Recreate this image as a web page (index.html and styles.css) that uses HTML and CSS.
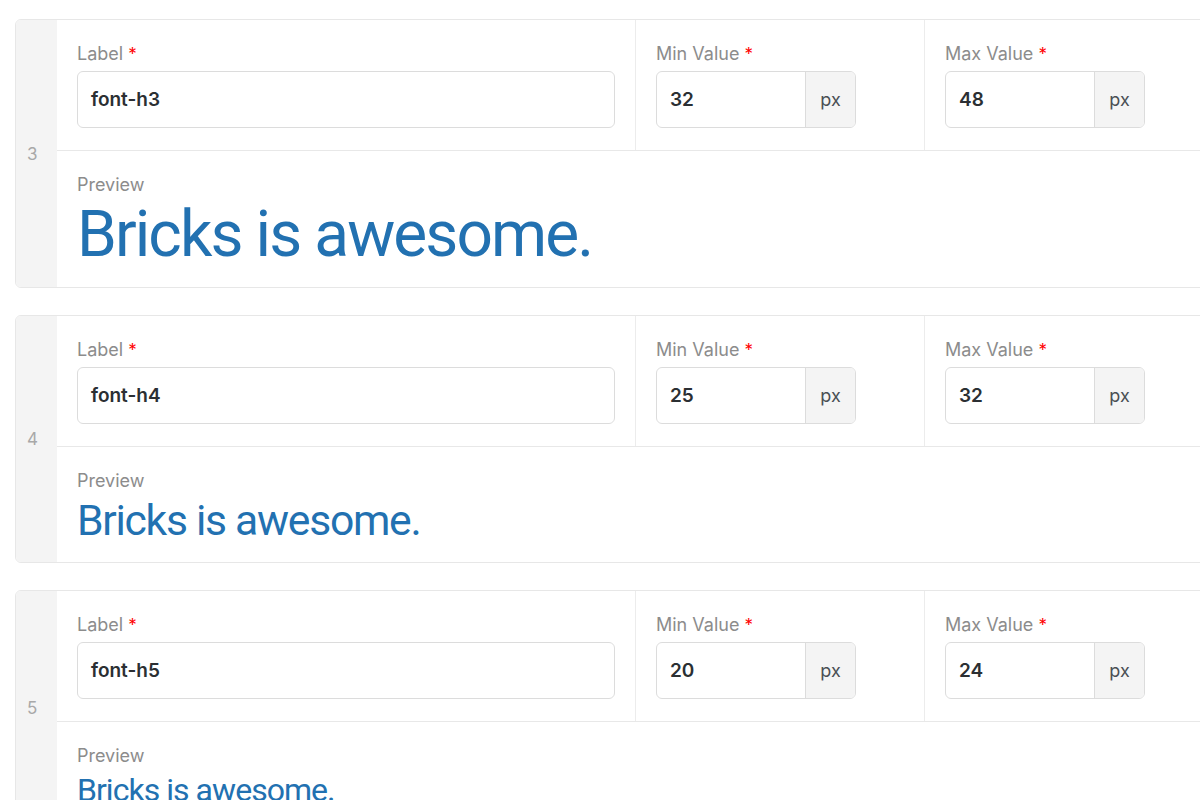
FILE: index.html
```html
<!DOCTYPE html>
<html>
<head>
<meta charset="utf-8">
<link rel="stylesheet" href="styles.css">
</head>
<body>
<div class="list">
  <div class="card">
    <div class="gutter"><span class="num">3</span></div>
    <div class="main">
      <div class="fields">
        <div class="col col-label">
          <div class="lbl">Label <span class="req">*</span></div>
          <div class="input"><span class="val">font-h3</span></div>
        </div>
        <div class="col">
          <div class="lbl">Min Value <span class="req">*</span></div>
          <div class="input unit"><span class="val">32</span><span class="addon">px</span></div>
        </div>
        <div class="col">
          <div class="lbl">Max Value <span class="req">*</span></div>
          <div class="input unit"><span class="val">48</span><span class="addon">px</span></div>
        </div>
      </div>
      <div class="preview">
        <div class="lbl">Preview</div>
        <div class="sample s-h3">Bricks is awesome.</div>
      </div>
    </div>
  </div>

  <div class="card">
    <div class="gutter"><span class="num">4</span></div>
    <div class="main">
      <div class="fields">
        <div class="col col-label">
          <div class="lbl">Label <span class="req">*</span></div>
          <div class="input"><span class="val">font-h4</span></div>
        </div>
        <div class="col">
          <div class="lbl">Min Value <span class="req">*</span></div>
          <div class="input unit"><span class="val">25</span><span class="addon">px</span></div>
        </div>
        <div class="col">
          <div class="lbl">Max Value <span class="req">*</span></div>
          <div class="input unit"><span class="val">32</span><span class="addon">px</span></div>
        </div>
      </div>
      <div class="preview">
        <div class="lbl">Preview</div>
        <div class="sample s-h4">Bricks is awesome.</div>
      </div>
    </div>
  </div>

  <div class="card">
    <div class="gutter"><span class="num">5</span></div>
    <div class="main">
      <div class="fields">
        <div class="col col-label">
          <div class="lbl">Label <span class="req">*</span></div>
          <div class="input"><span class="val">font-h5</span></div>
        </div>
        <div class="col">
          <div class="lbl">Min Value <span class="req">*</span></div>
          <div class="input unit"><span class="val">20</span><span class="addon">px</span></div>
        </div>
        <div class="col">
          <div class="lbl">Max Value <span class="req">*</span></div>
          <div class="input unit"><span class="val">24</span><span class="addon">px</span></div>
        </div>
      </div>
      <div class="preview">
        <div class="lbl">Preview</div>
        <div class="sample s-h5">Bricks is awesome.</div>
      </div>
    </div>
  </div>
</div>
</body>
</html>
```

FILE: styles.css
```css
html, body {
  margin: 0;
  padding: 0;
  background: #ffffff;
  overflow: hidden;
  width: 1200px;
  height: 800px;
}
body {
  font-family: Inter, "Noto Sans", "Liberation Sans", sans-serif;
  color: #2b2f33;
}
.list {
  padding: 19px 0 0 15px;
  display: flex;
  flex-direction: column;
  gap: 27px;
  width: 1400px;
}
.card {
  display: flex;
  border: 1px solid #e7e7e7;
  border-radius: 6px;
  overflow: hidden;
  background: #fff;
}
.gutter {
  width: 41px;
  flex: none;
  background: #f4f4f4;
  display: flex;
  align-items: center;
  padding-left: 11px;
  box-sizing: border-box;
}
.num {
  font-size: 17px;
  color: #a8a8a8;
}
.main {
  flex: 1;
  display: flex;
  flex-direction: column;
}
.fields {
  display: grid;
  grid-template-columns: 579px 289px 289px 1fr;
  border-bottom: 1px solid #e8e8e8;
}
.col {
  padding: 22px 20px 22px 20px;
  border-right: 1px solid #ececec;
}
.col:nth-child(3) {
  border-right: none;
}
.lbl {
  font-size: 18px;
  line-height: 24px;
  color: #8c8c8c;
  margin-bottom: 5px;
}
.preview .lbl {
  margin-bottom: 6px;
}
.req {
  color: #ff0000;
  font-size: 17px;
}
.input {
  height: 57px;
  box-sizing: border-box;
  border: 1px solid #dcdcdc;
  border-radius: 6px;
  display: flex;
  align-items: center;
  overflow: hidden;
  background: #fff;
}
.val {
  flex: 1;
  padding-left: 13px;
  font-size: 19px;
  font-weight: 600;
  color: #2b2f33;
}
.unit {
  width: 200px;
}
.addon {
  flex: none;
  width: 49px;
  align-self: stretch;
  display: flex;
  align-items: center;
  justify-content: center;
  background: #f4f4f4;
  border-left: 1px solid #dcdcdc;
  font-size: 18px;
  color: #4a4f54;
}
.preview {
  padding: 22px 20px 20px 20px;
}
.sample {
  font-family: Roboto, Inter, sans-serif;
  color: #2271b1;
  line-height: 1;
  white-space: nowrap;
  letter-spacing: -0.03em;
}
.s-h3 { font-size: 64px; }
.s-h4 { font-size: 42.67px; }
.s-h5 { font-size: 32px; }
```
